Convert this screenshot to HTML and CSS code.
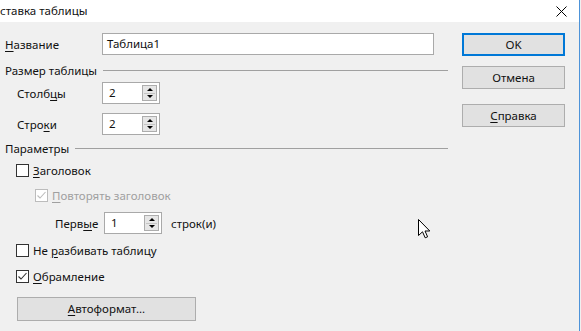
FILE: index.html
```html
<!DOCTYPE html>
<html lang="ru">
<head>
<meta charset="utf-8">
<title>Вставка таблицы</title>
<link rel="stylesheet" href="styles.css">
</head>
<body>
<div class="window">
  <div class="titlebar">
    <span class="title">ставка таблицы</span>
    <svg class="close" width="11" height="11" viewBox="0 0 11 11"><path d="M0.5 0.5 L10.5 10.5 M10.5 0.5 L0.5 10.5" stroke="#000" stroke-width="1" fill="none"/></svg>
  </div>
  <div class="content">
    <div class="main">
      <div class="row name-row">
        <label class="label top-label"><u>Н</u>азвание</label>
        <div class="textbox">Таблица1</div>
      </div>
      <div class="heading h-size"><span>Размер таблицы</span><span class="rule"></span></div>
      <div class="row spin-row r-cols">
        <label class="label sub-label">Столб<u>ц</u>ы</label>
        <div class="spin"><span class="val">2</span><span class="arrows"><i class="up"></i><i class="down"></i></span></div>
      </div>
      <div class="row spin-row r-rows">
        <label class="label sub-label">Стро<u>к</u>и</label>
        <div class="spin"><span class="val">2</span><span class="arrows"><i class="up"></i><i class="down"></i></span></div>
      </div>
      <div class="heading h-params"><span>Параметры</span><span class="rule"></span></div>
      <div class="row check-row c-head">
        <span class="box"></span><span><u>З</u>аголовок</span>
      </div>
      <div class="row check-row c-repeat disabled">
        <span class="box checked"><svg width="11" height="11" viewBox="0 0 11 11"><path d="M1.5 5.5 L4 8 L9.5 2" stroke="currentColor" stroke-width="1.1" fill="none"/></svg></span><span><u>П</u>овторять заголовок</span>
      </div>
      <div class="row spin-row r-first">
        <label class="label first-label">Перв<u>ы</u>е</label>
        <div class="spin"><span class="val">1</span><span class="arrows"><i class="up"></i><i class="down"></i></span></div>
        <span class="suffix">строк(и)</span>
      </div>
      <div class="row check-row c-split">
        <span class="box"></span><span>Не <u>р</u>азбивать таблицу</span>
      </div>
      <div class="row check-row c-border">
        <span class="box checked"><svg width="11" height="11" viewBox="0 0 11 11"><path d="M1.5 5.5 L4 8 L9.5 2" stroke="currentColor" stroke-width="1.1" fill="none"/></svg></span><span><u>О</u>брамление</span>
      </div>
      <div class="btn autoformat"><u>А</u>втоформат...</div>
    </div>
    <div class="side">
      <div class="btn default">OK</div>
      <div class="btn cancel">Отмена</div>
      <div class="btn help"><u>С</u>правка</div>
    </div>
  </div>
  <svg class="cursor" width="13" height="20" viewBox="0 0 13 20"><path d="M0.5 0.5 L0.5 16.5 L4.5 12.8 L7.2 18.8 L9.6 17.8 L7 12 L11.8 12 Z" fill="#fff" stroke="#000" stroke-width="1" stroke-linejoin="miter"/></svg>
</div>
</body>
</html>
```

FILE: styles.css
```css
* { box-sizing: border-box; }
html, body { margin: 0; padding: 0; background: #f0f0f0; }
body {
  font-family: "Noto Sans", "Open Sans", sans-serif;
  font-size: 11.5px;
  color: #111;
  width: 581px;
  height: 331px;
  overflow: hidden;
}
u { text-decoration: underline; text-underline-offset: 2px; text-decoration-thickness: 1px; }

.window {
  position: relative;
  width: 580px;
  height: 331px;
  background: #f0f0f0;
  border-right: 1px solid #4d93d9;
}

.titlebar {
  height: 22px;
  background: #fff;
  display: flex;
  align-items: center;
  justify-content: space-between;
  padding-right: 12px;
}
.title { margin-left: 0; line-height: 20px; }
.close { display: block; margin-top: 0; }

.content {
  display: flex;
  padding-top: 11px;
}
.main { width: 450px; display: flex; flex-direction: column; }
.side { margin-left: 12px; display: flex; flex-direction: column; }

.row { display: flex; align-items: center; }
.label { display: block; }
.top-label { width: 102px; padding-left: 5px; }
.sub-label { width: 102px; padding-left: 17px; }
.first-label { width: 104px; padding-left: 55px; }

.name-row { height: 22px; }
.textbox {
  width: 332px;
  height: 22px;
  background: #fff;
  border: 1px solid #a9a9a9;
  padding-left: 4px;
  line-height: 20px;
}

.heading { display: flex; align-items: center; height: 16px; padding-left: 5px; }
.heading .rule { flex: 1; border-top: 1px solid #a0a0a0; margin-left: 6px; margin-right: 2px; height: 0; }
.h-size { margin-top: 7px; }
.h-params { margin-top: 5px; }

.spin-row { height: 22px; }
.r-cols { margin-top: 4px; }
.r-rows { margin-top: 9px; }
.r-first { margin-top: 7px; }
.spin {
  width: 58px;
  height: 22px;
  background: #fff;
  border: 1px solid #a9a9a9;
  display: flex;
  align-items: center;
  justify-content: space-between;
  padding: 2px;
}
.spin .val { padding-left: 4px; line-height: 16px; }
.arrows {
  width: 15px;
  height: 16px;
  border: 1px solid #adadad;
  background: #e6e6e6;
  display: flex;
  flex-direction: column;
  justify-content: space-around;
  align-items: center;
  margin-right: 0;
  position: relative;
}
.arrows::after {
  content: "";
  position: absolute;
  left: 1px; right: 1px; top: 7px;
  border-top: 1px solid #c4c4c4;
}
.arrows i { display: block; width: 0; height: 0; border-left: 3px solid transparent; border-right: 3px solid transparent; }
.arrows .up { border-bottom: 3px solid #000; }
.arrows .down { border-top: 3px solid #000; }
.suffix { margin-left: 9px; }

.check-row { height: 20px; padding-left: 16px; }
.check-row .box {
  width: 13px;
  height: 13px;
  border: 1px solid #333;
  background: #fff;
  margin-right: 4px;
  color: #333;
  display: flex;
  align-items: center;
  justify-content: center;
}
.check-row .box svg { display: block; }
.c-head { margin-top: 4px; }
.c-repeat { margin-top: 5px; padding-left: 35px; }
.disabled { color: #a0a0a0; }
.disabled .box { border-color: #bcbcbc; color: #bcbcbc; }
.c-split { margin-top: 6px; }
.c-border { margin-top: 6px; }

.btn {
  height: 23px;
  background: #e1e1e1;
  border: 1px solid #adadad;
  display: flex;
  align-items: center;
  justify-content: center;
  line-height: 16px;
}
.side .btn { width: 103px; }
.btn.default { border: 2px solid #0078d7; }
.btn.cancel { margin-top: 10px; }
.btn.help { margin-top: 15px; }
.autoformat { width: 179px; margin-left: 17px; margin-top: 11px; height: 24px; }

.cursor { position: absolute; left: 418px; top: 219px; display: block; }
```
